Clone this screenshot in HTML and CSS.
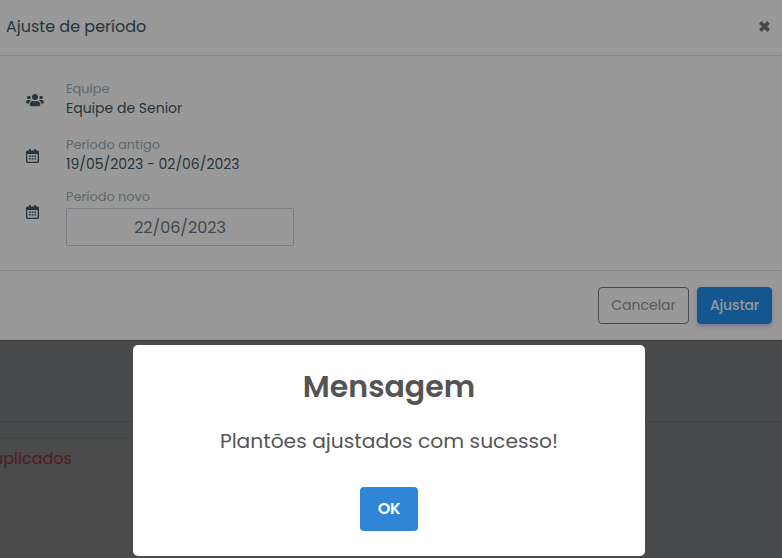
FILE: index.html
```
<!doctype html>
<html lang="pt-br">
<head>
<meta charset="utf-8">
<title>Ajuste de período</title>
<link rel="stylesheet" href="styles.css">
</head>

<body>
    <div class="modal">
        <div class="modal-header">
            <h5>Ajuste de período</h5>
            <svg class="close" viewBox="0 0 12 12"><path d="M2.200 2.200L9.800 9.800M9.800 2.200L2.200 9.800"/></svg>
        </div>
        <div class="modal-body">
            <div class="item">
                <svg class="icon-users" viewBox="0 0 640 512"><path d="M96 224c35.300 0 64-28.700 64-64s-28.700-64-64-64-64 28.700-64 64 28.700 64 64 64zm448 0c35.300 0 64-28.700 64-64s-28.700-64-64-64-64 28.700-64 64 28.700 64 64 64zm32 32h-64c-17.600 0-33.500 7.100-45.100 18.600 40.300 22.100 68.900 62 75.100 109.400h66c17.700 0 32-14.300 32-32v-32c0-35.300-28.700-64-64-64zm-256 0c61.900 0 112-50.100 112-112S381.900 32 320 32 208 82.100 208 144s50.100 112 112 112zm76.800 32h-8.300c-20.800 10-43.900 16-68.500 16s-47.600-6-68.500-16h-8.300C179.600 288 128 339.600 128 403.200V432c0 26.500 21.500 48 48 48h288c26.500 0 48-21.500 48-48v-28.800c0-63.600-51.600-115.200-115.200-115.200zm-223.700-13.400C161.500 263.100 145.600 256 128 256H64c-35.300 0-64 28.700-64 64v32c0 17.700 14.300 32 32 32h65.900c6.300-47.400 34.900-87.300 75.200-109.400z"/></svg>
                <div class="info">
                    <small>Equipe</small>
                    <p>Equipe de Senior</p>
                </div>
            </div>
            <div class="item">
                <svg class="icon-date" viewBox="0 0 13 14"><path fill-rule="evenodd" d="M3 0h1.700v1.500h3.600V0H10v1.500h1.500Q13 1.500 13 3v9.500q0 1.500-1.500 1.500h-10Q0 14 0 12.500V3q0-1.500 1.500-1.500H3zM1.300 5v7.100q0 .6.600.6h9.200q.6 0 .6-.6V5zM3 6.500h1.600v1.400H3zm2.700 0h1.600v1.400H5.700zm2.700 0H10v1.400H8.400zM3 9h1.600v1.400H3zm2.700 0h1.600v1.400H5.700zm2.700 0H10v1.400H8.400z"/></svg>
                <div class="info">
                    <small>Período antigo</small>
                    <p>19/05/2023 - 02/06/2023</p>
                </div>
            </div>
            <div class="item item-new">
                <svg class="icon-date" viewBox="0 0 13 14"><path fill-rule="evenodd" d="M3 0h1.700v1.500h3.600V0H10v1.500h1.500Q13 1.500 13 3v9.500q0 1.500-1.500 1.500h-10Q0 14 0 12.500V3q0-1.500 1.500-1.500H3zM1.300 5v7.100q0 .6.600.6h9.200q.6 0 .6-.6V5zM3 6.500h1.600v1.400H3zm2.700 0h1.600v1.400H5.700zm2.700 0H10v1.400H8.400zM3 9h1.600v1.400H3zm2.700 0h1.600v1.400H5.700zm2.700 0H10v1.400H8.400z"/></svg>
                <div class="info">
                    <small>Período novo</small>
                    <div class="input">22/06/2023</div>
                </div>
            </div>
        </div>
        <div class="modal-footer">
            <button class="btn btn-cancel">Cancelar</button>
            <button class="btn btn-primary">Ajustar</button>
        </div>
    </div>
    <div class="page">
        <div class="toolbar"></div>
        <div class="card">uplicados</div>
    </div>

    <div class="popup">
        <h2>Mensagem</h2>
        <p>Plantões ajustados com sucesso!</p>
        <button class="ok">OK</button>
    </div>
</body>
</html>
```
FILE: styles.css
```
* {margin:0; padding:0; box-sizing:border-box;}
body {width:782px; height:558px; overflow:hidden; position:relative; background:#48494a; font-family:Poppins, Inter, "Open Sans", sans-serif; color:#26343b;}
button {font-family:inherit;}

/* modal */
.modal {height:340px; background:#999;}
.modal-header {height:56px; padding:0 11px 2px 6px; border-bottom:1px solid #858585; display:flex; align-items:center; justify-content:space-between;}
.modal-header h5 {font-size:16px; font-weight:400; line-height:24px;}
.close {width:13px; height:13px; fill:none; stroke:#484848; stroke-width:3.4;}
.modal-body {height:215px; padding:24px 24px 0 26px; border-bottom:1px solid #868a8e;}
.item {height:56px; display:flex;}
.item svg {flex:none; fill:#26343b;}
.icon-users {width:18px; height:14px; margin:13px 22px 0 0;}
.icon-date {width:13px; height:14px; margin:13px 27px 0 0;}
.info small {display:block; font-size:12.900px; line-height:18px; color:#5a686e;}
.info p {font-size:14px; line-height:20px;}
.item-new .info {margin-top:-4px;}
.input {width:228px; height:38px; margin-top:2px; border:1px solid #7b7c86; border-radius:2px; text-align:center; font-size:16px; line-height:37px; color:#41484c;}
.modal-footer {height:69px; padding:0 10px; display:flex; align-items:center; justify-content:flex-end; gap:8px;}
.btn {height:37px; border-radius:4px; font-size:14px; border:1px solid #454952; text-align:center;}
.btn-cancel {width:91px; background:none; color:#565a5f;}
.btn-primary {width:75px; background:#14568f; border-color:#14568f; color:#999; font-weight:500; letter-spacing:-.15px; box-shadow:0 2px 4px rgba(70,55,130,.4);}

/* page behind */
.page {height:218px; border-top:1px solid #3a3b3c;}
.toolbar {height:81px; border-bottom:1px solid #404142;}
.card {width:400px; height:121px; margin-top:16px; padding-top:9px; background:#4a4a4a; border-top:1px solid #3d4644; font-size:16px; line-height:22px; color:#551a20; text-indent:-7px;}

/* message */
.popup {position:absolute; left:133px; top:345px; width:512px; height:211px; background:#fff; border-radius:5px; text-align:center; color:#545454;}
.popup h2 {padding-top:20px; font-size:30px; font-weight:600; line-height:44px;}
.popup p {padding-top:17px; font-size:20.250px; line-height:30px;}
.ok {width:58px; height:44px; margin-top:31px; padding-bottom:2px; border:0; border-radius:4px; background:#3085d6; color:#fff; font-size:16px; font-weight:600; letter-spacing:-.4px;}
```
